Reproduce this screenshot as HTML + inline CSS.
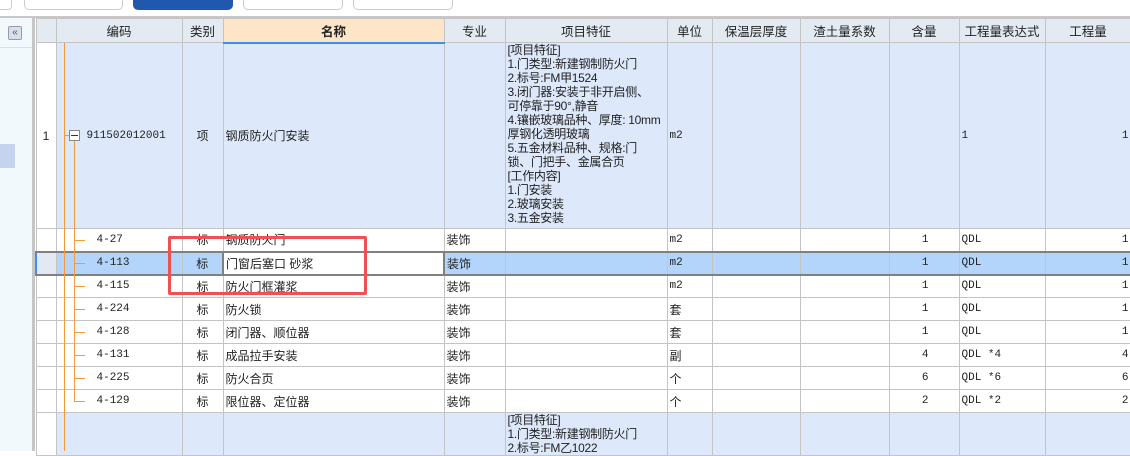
<!DOCTYPE html><html><head><meta charset="utf-8"><style>
*{margin:0;padding:0;box-sizing:border-box}
body{width:1130px;height:451px;overflow:hidden;background:#fff;position:relative;font-family:"Liberation Sans","Noto Sans CJK SC",sans-serif;font-size:12px;color:#222}
.a{position:absolute}
table{position:absolute;left:35px;top:18px;border-collapse:collapse;table-layout:fixed;width:1095px}
td{border:1px solid #c4c4c4;padding:0 2px;white-space:nowrap;overflow:hidden;font-size:12px;height:23px;vertical-align:middle}
th{background:#e4eaf2;border:1px solid #c4c4c4;font-weight:normal;height:24px;font-size:12.5px}
.m{font-family:"Liberation Mono","Noto Sans CJK SC",monospace;font-size:11px}
.b td{background:#dde9fb}
.c{text-align:center}.r{text-align:right}
.f{font-size:12px;line-height:14px;vertical-align:top;padding-top:0;letter-spacing:-0.3px}
.sel td{background:#b3d5fb;border-top:2px solid #808080;border-bottom:2px solid #808080}
</style></head><body>
<div class="a" style="left:0;top:0;width:1130px;height:17px;background:#fff"></div>
<div class="a" style="left:-5px;top:-8px;width:17px;height:18px;border:1px solid #ccc;border-radius:4px"></div>
<div class="a" style="left:24px;top:-8px;width:99px;height:18px;border:1px solid #ccc;border-radius:5px"></div>
<div class="a" style="left:133px;top:-8px;width:100px;height:18px;background:#2058b0;border-radius:5px"></div>
<div class="a" style="left:243px;top:-8px;width:100px;height:18px;border:1px solid #ccc;border-radius:5px"></div>
<div class="a" style="left:353px;top:-8px;width:100px;height:18px;border:1px solid #ccc;border-radius:5px"></div>
<div class="a" style="left:0;top:16px;width:1130px;height:2px;background:#c8c8c8"></div>
<div class="a" style="left:0;top:18px;width:33px;height:433px;background:#f2f9fd;border-right:1px solid #ddd"></div>
<div class="a" style="left:32px;top:18px;width:3px;height:433px;background:#c6c6c6"></div>
<div class="a" style="left:0;top:47px;width:32px;height:1px;background:#dde"></div>
<div class="a" style="left:8px;top:26px;width:14px;height:14px;background:#d8e0ea;border:1px solid #99a;border-radius:2px;font-size:10px;line-height:11px;text-align:center;color:#556">«</div>
<div class="a" style="left:0;top:144px;width:15px;height:24px;background:#c5d3ee"></div>
<table>
<colgroup><col style="width:20px"><col style="width:126px"><col style="width:41px"><col style="width:221px"><col style="width:61px"><col style="width:162px"><col style="width:45px"><col style="width:88px"><col style="width:89px"><col style="width:70px"><col style="width:86px"><col style="width:86px"></colgroup>
<tr><th></th><th>编码</th><th>类别</th><th style="background:#fde6c8;font-weight:bold;border-bottom:2px solid #3b8ff0">名称</th><th>专业</th><th>项目特征</th><th>单位</th><th>保温层厚度</th><th>渣土量系数</th><th>含量</th><th>工程量表达式</th><th>工程量</th></tr>
<tr class="b"><td style="height:186px;background:#fff;text-align:center">1</td><td class="m" style="padding-left:30px">911502012001</td><td class="c">项</td><td>钢质防火门安装</td><td></td><td class="f">[项目特征]<br>1.门类型:新建钢制防火门<br>2.标号:FM甲1524<br>3.闭门器:安装于非开启侧、<br>可停靠于90°,静音<br>4.镶嵌玻璃品种、厚度: 10mm<br>厚钢化透明玻璃<br>5.五金材料品种、规格:门<br>锁、门把手、金属合页<br>[工作内容]<br>1.门安装<br>2.玻璃安装<br>3.五金安装</td><td class="m">m2</td><td></td><td></td><td></td><td class="m">1</td><td class="r m">1</td></tr>
<tr><td></td><td class="m" style="padding-left:40px">4-27</td><td class="c">标</td><td>钢质防火门</td><td>装饰</td><td></td><td class="m">m2</td><td></td><td></td><td class="r m" style="padding-right:30px">1</td><td class="m">QDL</td><td class="r m">1</td></tr>
<tr class="sel"><td style="background:#e3e9f3;border-left:2px solid #3b8ff0"></td><td class="m" style="padding-left:40px">4-113</td><td class="c">标</td><td style="background:#fff;border:2px solid #808080">门窗后塞口 砂浆</td><td>装饰</td><td></td><td class="m">m2</td><td></td><td></td><td class="r m" style="padding-right:30px">1</td><td class="m">QDL</td><td class="r m">1</td></tr>
<tr><td></td><td class="m" style="padding-left:40px">4-115</td><td class="c">标</td><td>防火门框灌浆</td><td>装饰</td><td></td><td class="m">m2</td><td></td><td></td><td class="r m" style="padding-right:30px">1</td><td class="m">QDL</td><td class="r m">1</td></tr>
<tr><td></td><td class="m" style="padding-left:40px">4-224</td><td class="c">标</td><td>防火锁</td><td>装饰</td><td></td><td>套</td><td></td><td></td><td class="r m" style="padding-right:30px">1</td><td class="m">QDL</td><td class="r m">1</td></tr>
<tr><td></td><td class="m" style="padding-left:40px">4-128</td><td class="c">标</td><td>闭门器、顺位器</td><td>装饰</td><td></td><td>套</td><td></td><td></td><td class="r m" style="padding-right:30px">1</td><td class="m">QDL</td><td class="r m">1</td></tr>
<tr><td></td><td class="m" style="padding-left:40px">4-131</td><td class="c">标</td><td>成品拉手安装</td><td>装饰</td><td></td><td>副</td><td></td><td></td><td class="r m" style="padding-right:30px">4</td><td class="m">QDL *4</td><td class="r m">4</td></tr>
<tr><td></td><td class="m" style="padding-left:40px">4-225</td><td class="c">标</td><td>防火合页</td><td>装饰</td><td></td><td>个</td><td></td><td></td><td class="r m" style="padding-right:30px">6</td><td class="m">QDL *6</td><td class="r m">6</td></tr>
<tr><td></td><td class="m" style="padding-left:40px">4-129</td><td class="c">标</td><td>限位器、定位器</td><td>装饰</td><td></td><td>个</td><td></td><td></td><td class="r m" style="padding-right:30px">2</td><td class="m">QDL *2</td><td class="r m">2</td></tr>
<tr class="b"><td style="height:40px;background:#fff"></td><td></td><td></td><td></td><td></td><td class="f">[项目特征]<br>1.门类型:新建钢制防火门<br>2.标号:FM乙1022</td><td></td><td></td><td></td><td></td><td></td><td></td></tr>
</table>
<div class="a" style="left:64px;top:43px;width:1px;height:408px;background:#f39a3a"></div>
<div class="a" style="left:64px;top:135px;width:5px;height:1px;background:#f39a3a"></div>
<div class="a" style="left:74px;top:141px;width:1px;height:261px;background:#f39a3a"></div>
<div class="a" style="left:69px;top:130px;width:11px;height:11px;border:1px solid #888;background:#fff"></div>
<div class="a" style="left:71px;top:135px;width:7px;height:1px;background:#333"></div>
<div class="a" style="left:74px;top:240px;width:11px;height:1px;background:#f39a3a"></div>
<div class="a" style="left:74px;top:263px;width:11px;height:1px;background:#f39a3a"></div>
<div class="a" style="left:74px;top:286px;width:11px;height:1px;background:#f39a3a"></div>
<div class="a" style="left:74px;top:309px;width:11px;height:1px;background:#f39a3a"></div>
<div class="a" style="left:74px;top:332px;width:11px;height:1px;background:#f39a3a"></div>
<div class="a" style="left:74px;top:355px;width:11px;height:1px;background:#f39a3a"></div>
<div class="a" style="left:74px;top:378px;width:11px;height:1px;background:#f39a3a"></div>
<div class="a" style="left:74px;top:401px;width:11px;height:1px;background:#f39a3a"></div>
<div class="a" style="left:168px;top:236px;width:199px;height:59px;border:3px solid #ef5050;border-radius:2px"></div>
</body></html>
